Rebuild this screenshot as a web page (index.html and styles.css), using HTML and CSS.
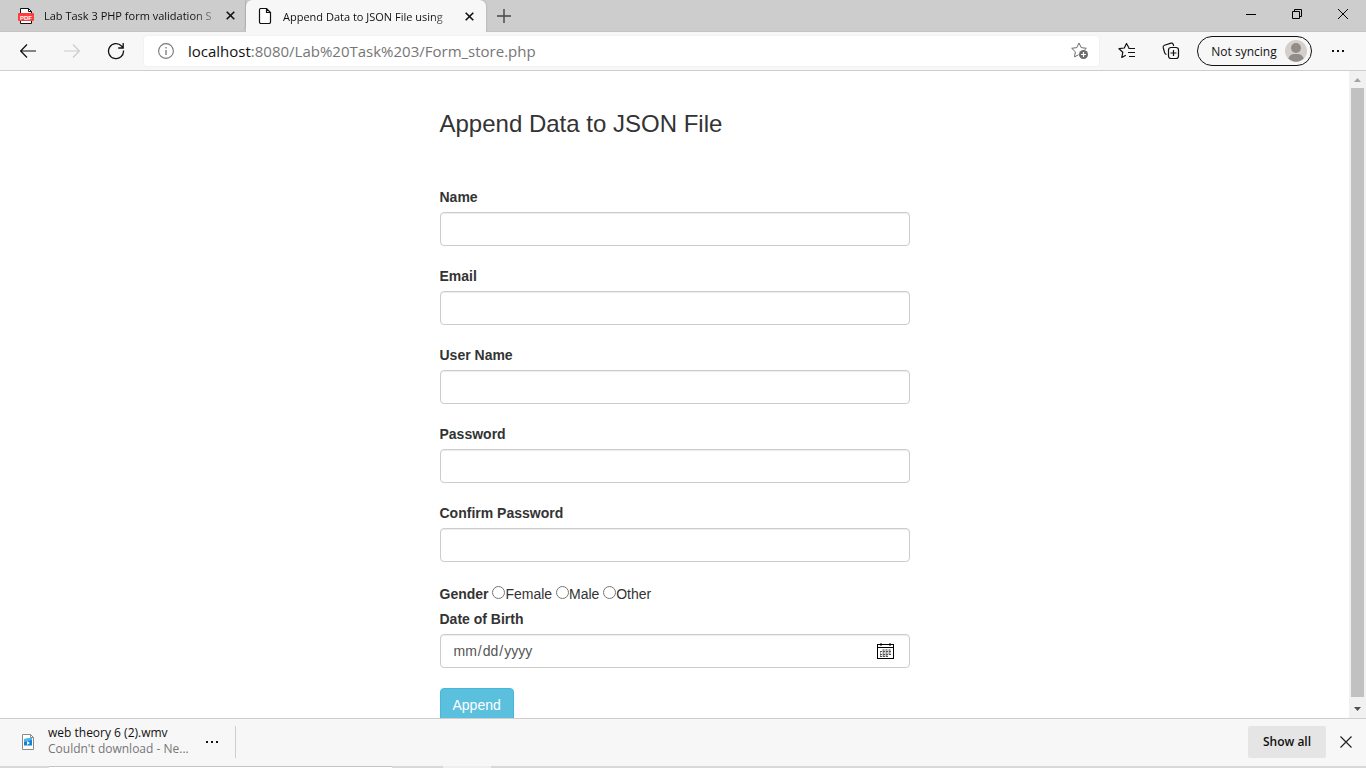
FILE: index.html
```html
<!DOCTYPE html>
<html lang="en">
<head>
<meta charset="utf-8">
<title>Append Data to JSON File using PHP</title>
<link rel="stylesheet" href="styles.css">
</head>
<body>
<div class="browser">
  <header class="tabbar">
    <div class="tab">
      <svg class="tab-icon" width="16" height="16" viewBox="0 0 16 16"><path d="M2.500 15.500V.5h8l3 3v12z" fill="#fff" stroke="#111"/><path d="M10.500.5v3h3" fill="none" stroke="#111"/><rect x="0" y="5" width="16" height="8" rx="1" fill="#ff3b3b"/><text class="badge" x="8" y="11.500" text-anchor="middle">PDF</text></svg>
      <span class="tab-title">Lab Task 3 PHP form validation S</span>
      <button class="tab-close" type="button" aria-label="Close tab"><svg width="9" height="9" viewBox="0 0 9 9"><path d="M.7.7l7.600 7.600M8.300.7L.7 8.300" stroke="#111" stroke-width="1.600"/></svg></button>
    </div>
    <div class="tab tab-active">
      <svg class="tab-icon" width="16" height="16" viewBox="0 0 16 16"><path d="M2.500 14V2Q2.500.5 4 .5h5.500l4 4V14q0 1.500-1.500 1.500H4Q2.500 15.500 2.500 14zM9.500.5v4h4" fill="#fff" stroke="#111" stroke-width="1.200"/></svg>
      <span class="tab-title">Append Data to JSON File using</span>
      <button class="tab-close" type="button" aria-label="Close tab"><svg width="9" height="9" viewBox="0 0 9 9"><path d="M.7.7l7.600 7.600M8.300.7L.7 8.300" stroke="#111" stroke-width="1.600"/></svg></button>
    </div>
    <button class="new-tab" type="button" aria-label="New tab"><svg width="14" height="14" viewBox="0 0 14 14"><path d="M7 0v14M0 7h14" stroke="#444" stroke-width="1.400"/></svg></button>
    <div class="window-controls">
      <button type="button" aria-label="Minimize"><svg width="10" height="10" viewBox="0 0 10 10"><path d="M0 5.500h10" stroke="#000"/></svg></button>
      <button type="button" aria-label="Restore"><svg width="10" height="10" viewBox="0 0 10 10"><path d="M.5 2.500h7v7h-7zM2.500 2.500v-2h7v7h-2" fill="none" stroke="#000"/></svg></button>
      <button type="button" aria-label="Close"><svg width="10" height="10" viewBox="0 0 10 10"><path d="M0 0l10 10M10 0L0 10" stroke="#000"/></svg></button>
    </div>
  </header>

  <nav class="toolbar">
    <div class="nav-buttons">
      <button type="button" aria-label="Back"><svg width="16" height="14" viewBox="0 0 16 14"><path d="M7 .5L.7 7 7 13.500M.7 7H16" fill="none" stroke="#111" stroke-width="1.200"/></svg></button>
      <button type="button" aria-label="Forward" disabled><svg width="16" height="14" viewBox="0 0 16 14"><path d="M9 .5L15.300 7 9 13.500M15.300 7H0" fill="none" stroke="#ccc" stroke-width="1.200"/></svg></button>
      <button type="button" aria-label="Refresh"><svg width="18" height="18" viewBox="0 0 18 18"><path d="M16.500 8.500A7.500 7.500 0 1 1 14.500 4l1.500 1.500M16.200 1v5h-5" fill="none" stroke="#111" stroke-width="1.300"/></svg></button>
    </div>
    <div class="address">
      <svg width="16" height="16" viewBox="0 0 16 16"><circle cx="8" cy="8" r="7.400" fill="none" stroke="#767676" stroke-width="1.100"/><path d="M8 7v5M8 4v1.500" stroke="#767676" stroke-width="1.300"/></svg>
      <span class="url"><span class="host">localhost</span>:8080/Lab%20Task%203/Form_store.php</span>
      <button type="button" aria-label="Add to favorites"><svg width="18" height="18" viewBox="0 0 18 18"><path d="M8 1l2.200 4.600 5.100.7-3.700 3.500.9 5.100L8 12.500l-4.500 2.400.9-5.100L.7 6.300l5.100-.7z" fill="none" stroke="#6b6b6b"/><circle cx="12.500" cy="12.500" r="5" fill="#fff"/><circle cx="12.500" cy="12.500" r="4.500" fill="#6b6b6b"/><path d="M12.500 10v5M10 12.500h5" stroke="#fff" stroke-width="1.200"/></svg></button>
    </div>
    <div class="tools">
      <button type="button" aria-label="Favorites"><svg width="18" height="18" viewBox="0 0 18 18"><path d="M11 6L8.500 1.500 6.300 6 1 6.700l3.800 3.600-1 5.200 4-2.200" fill="none" stroke="#111" stroke-width="1.200" stroke-linejoin="round"/><path d="M10.500 6.500H17M10 10.500h7M11 14.500h6" stroke="#111" stroke-width="1.200"/></svg></button>
      <button type="button" aria-label="Collections"><svg width="18" height="18" viewBox="0 0 18 18"><path d="M4.500 12.500Q3 12 2.600 10.600L1.200 5.500Q.8 3.800 2.500 3.200L9 1.200Q10.500.8 11.200 2.200L11.700 4" fill="none" stroke="#111" stroke-width="1.200"/><rect x="6.500" y="5.500" width="10" height="11" rx="2.500" fill="#f7f7f7" stroke="#111" stroke-width="1.200"/><path d="M11.500 8v6M8.500 11h6" stroke="#111" stroke-width="1.200"/></svg></button>
      <button class="profile" type="button">Not syncing<svg width="22" height="22" viewBox="0 0 22 22"><circle cx="11" cy="11" r="11" fill="#d3d0cc"/><circle cx="11" cy="8" r="5" fill="#918c88"/><path d="M3.300 18.500Q5 14 9 14h4q4 0 5.700 4.500a11 11 0 0 1-15.400 0z" fill="#918c88"/></svg></button>
      <button class="more" type="button" aria-label="Settings and more"><svg width="14" height="4" viewBox="0 0 14 4"><path d="M1 1h2v2H1zM6 1h2v2H6zM11 1h2v2h-2z" fill="#111"/></svg></button>
    </div>
  </nav>

  <div class="viewport">
    <main class="page">
      <form class="form">
        <h3>Append Data to JSON File</h3>
        <div class="field"><label for="name">Name</label><input class="control" id="name" type="text"></div>
        <div class="field"><label for="email">Email</label><input class="control" id="email" type="text"></div>
        <div class="field"><label for="user">User Name</label><input class="control" id="user" type="text"></div>
        <div class="field"><label for="pass">Password</label><input class="control" id="pass" type="password"></div>
        <div class="field"><label for="confirm">Confirm Password</label><input class="control" id="confirm" type="password"></div>
        <div class="gender" role="radiogroup" aria-labelledby="gender-label">
          <strong id="gender-label">Gender</strong>
          <label><input type="radio" name="gender">Female</label>
          <label><input type="radio" name="gender">Male</label>
          <label><input type="radio" name="gender">Other</label>
        </div>
        <div class="field">
          <label for="dob">Date of Birth</label>
          <div class="date-wrap">
            <input class="control" id="dob" type="date">
            <svg class="calendar" width="17" height="16" viewBox="0 0 17 16"><rect x=".5" y="1.500" width="16" height="14" fill="#fff" stroke="#000"/><path d="M1 4.500h15" stroke="#000"/><path d="M4 0v3M13 0v3" stroke="#000"/><path d="M6.500 6v8M9.500 6v8M12.500 6v6" stroke="#999" stroke-width="2"/><path d="M3.500 8v6" stroke="#999"/><path d="M3 8.500h11M3 11.500h11M3 13.500h8" stroke="#555" stroke-dasharray="2 1"/></svg>
          </div>
        </div>
        <button class="append" type="submit">Append</button>
      </form>
    </main>
    <div class="scrollbar" aria-hidden="true">
      <svg width="17" height="17" viewBox="0 0 17 17"><path d="M5 11l3.500-4 3.500 4z" fill="#a3a3a3"/></svg>
      <div class="thumb"></div>
      <svg width="17" height="17" viewBox="0 0 17 17"><path d="M5 6h7l-3.500 4z" fill="#505050"/></svg>
    </div>
  </div>

  <footer class="downloads">
    <div class="download">
      <svg width="12" height="16" viewBox="0 0 12 16"><path d="M.5.500H8.500l3 3v12H.5z" fill="#fff" stroke="#8a8a8a"/><path d="M8.500.5v3h3" fill="none" stroke="#8a8a8a"/><path d="M2 5l8-1v7.500H2z" fill="#1681d0"/><path d="M2 5l8-1v2L2 8z" fill="#48b6ef"/><path d="M5 7l3 2-3 2z" fill="#fff"/></svg>
      <div class="download-text"><div>web theory 6 (2).wmv</div><div class="status">Couldn't download - Ne...</div></div>
      <button type="button" aria-label="Download options"><svg width="14" height="4" viewBox="0 0 14 4"><path d="M1 1h2v2H1zM6 1h2v2H6zM11 1h2v2h-2z" fill="#111"/></svg></button>
    </div>
    <button class="show-all" type="button">Show all</button>
    <button class="close-bar" type="button" aria-label="Close downloads bar"><svg width="12" height="12" viewBox="0 0 12 12"><path d="M.5.500l11 11M11.500.5l-11 11" stroke="#222" stroke-width="1.200"/></svg></button>
  </footer>
  <div class="edge"><span class="edge-light"></span><span class="edge-dark"></span><span class="edge-gap"></span><span class="edge-rest"></span></div>
</div>
</body>
</html>
```

FILE: styles.css
```css
* { box-sizing: border-box; }
body {
  margin: 0;
  font-family: "Open Sans", "Noto Sans", sans-serif;
  font-size: 12px;
  color: #111;
}
button {
  display: flex;
  align-items: center;
  justify-content: center;
  padding: 0;
  border: 0;
  background: none;
  font: inherit;
  color: inherit;
}
svg { display: block; flex: none; }
.browser { display: flex; flex-direction: column; height: 100vh; overflow: hidden; }

.tabbar { display: flex; flex: none; height: 32px; background: #cdcdcd; border-bottom: 1px solid #c4c4c4; }
.tab { display: flex; align-items: center; width: 246px; padding: 0 7px 0 18px; border-right: 1px solid #b8b8b8; border-radius: 0 0 6px 0; }
.tab-active {
  width: 240px;
  padding: 0 9px 0 11px;
  height: 32px;
  background: #f7f7f7;
  border: 0;
  border-radius: 6px 6px 0 0;
  box-shadow: 0 0 2px #999;
  clip-path: inset(0 -2px 0 -2px);
}
.badge { font: 700 6px "Liberation Sans", sans-serif; fill: #fff; }
.tab-title {
  flex: 1;
  min-width: 0;
  margin: 0 5px 0 10px;
  overflow: hidden;
  font-size: 11px;
  white-space: nowrap;
  -webkit-mask-image: linear-gradient(to right, #000 86%, rgba(0, 0, 0, .2));
  mask-image: linear-gradient(to right, #000 86%, rgba(0, 0, 0, .2));
}
.tab-close { width: 16px; height: 16px; }
.new-tab { width: 36px; }
.window-controls { display: flex; flex: 1; justify-content: flex-end; padding-bottom: 3px; }
.window-controls button { width: 46px; }

.toolbar { display: flex; flex: none; align-items: center; height: 39px; background: #f7f7f7; border-bottom: 1px solid #cecece; }
.nav-buttons { display: flex; padding-left: 6px; }
.nav-buttons button { width: 44px; height: 32px; }
.address {
  display: flex;
  flex: 1;
  align-items: center;
  min-width: 0;
  height: 30px;
  margin-left: 6px;
  padding: 0 10px 0 14px;
  background: #fff;
  border-radius: 3px;
  box-shadow: 0 0 2px #e4e4e4;
}
.url { flex: 1; margin-left: 14px; overflow: hidden; font-size: 15px; color: #767676; white-space: nowrap; }
.host { color: #111; }
.tools { display: flex; align-items: center; padding-left: 6px; }
.tools button { width: 44px; height: 30px; }
.tools .profile { width: 115px; margin-left: 4px; padding-left: 9px; gap: 8px; border: 1px solid #111; border-radius: 15px; }
.tools .more { width: 52px; margin-right: 2px; }

.viewport { display: flex; flex: 1; min-height: 0; overflow: hidden; background: #fff; }
.page { flex: 1; overflow: hidden; font: 14px/20px "Liberation Sans", Arial, sans-serif; color: #333; }
.form { max-width: 470px; margin: 0 auto; padding-top: 40px; }
h3 { margin: 0 0 50px; font-size: 24px; font-weight: 400; line-height: 26px; }
.field { margin-bottom: 20px; }
.field label { display: table; margin-bottom: 5px; font-weight: 700; }
.control {
  display: block;
  width: 100%;
  height: 34px;
  padding: 6px 12px;
  border: 1px solid #ccc;
  border-radius: 4px;
  background: #fff;
  box-shadow: inset 0 1px 1px rgba(0, 0, 0, .075);
  font: inherit;
  color: #555;
}
.gender { margin: 22px 0 5px; }
.gender input { width: 13px; height: 13px; margin: 0; vertical-align: baseline; }
.date-wrap { position: relative; }
.date-wrap input::-webkit-calendar-picker-indicator { opacity: 0; }
.calendar { position: absolute; top: 9px; right: 16px; pointer-events: none; }
.append { height: 34px; padding: 0 12px; border: 1px solid #46b8da; border-radius: 4px; background: #5bc0de; color: #fff; }

.scrollbar { display: flex; flex-direction: column; width: 17px; background: #f1f1f1; }
.thumb { flex: 1; margin: 0 2px 4px; background: #c1c1c1; }

.downloads { display: flex; flex: none; align-items: center; height: 48px; padding: 0 10px 2px 0; background: #f7f7f7; border-top: 1px solid #cecece; }
.download { display: flex; align-items: center; width: 236px; height: 32px; margin-right: auto; padding-left: 22px; border-right: 1px solid #cecece; }
.download-text { width: 152px; margin-left: 14px; padding-bottom: 2px; line-height: 16px; white-space: nowrap; }
.status { color: #767676; }
.download button { width: 24px; height: 24px; }
.show-all { width: 78px; height: 32px; border-radius: 2px; background: #e5e5e5; font-weight: 600; }
.close-bar { width: 20px; height: 32px; margin-left: 10px; }
.edge { display: flex; flex: none; height: 2px; background: #d8d8d8; }
.edge-light { width: 49px; }
.edge-dark { width: 343px; background: #fff; border-top: 1px solid #c4c4c4; }
.edge-gap { width: 51px; }
.edge-rest { width: 48px; background: #eee; }
```
